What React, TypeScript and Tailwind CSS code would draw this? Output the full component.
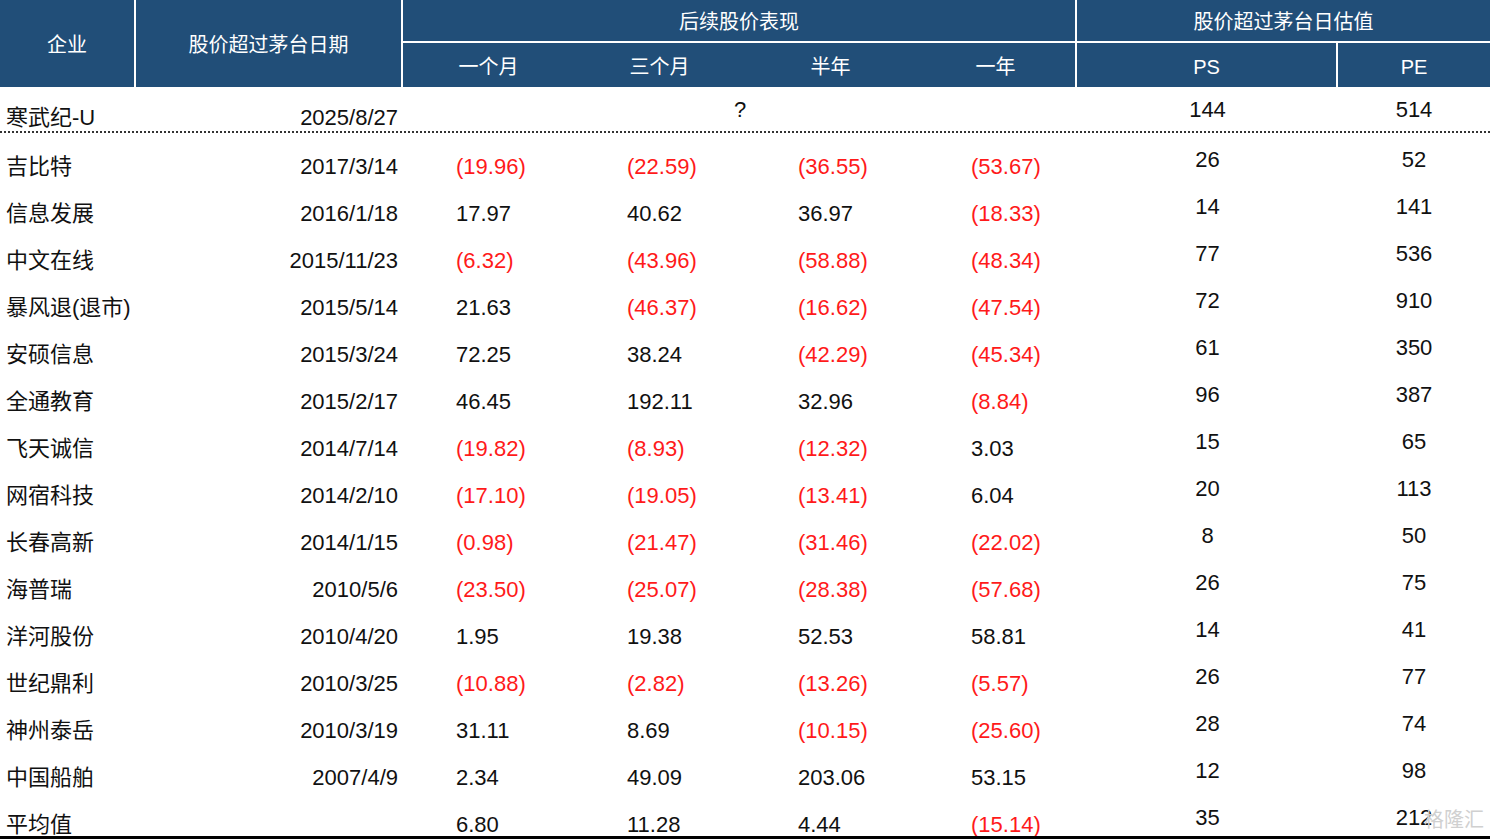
const rows: [string, string, string[], string, string][] = [
  ["吉比特", "2017/3/14", ["(19.96)", "(22.59)", "(36.55)", "(53.67)"], "26", "52"],
  ["信息发展", "2016/1/18", ["17.97", "40.62", "36.97", "(18.33)"], "14", "141"],
  ["中文在线", "2015/11/23", ["(6.32)", "(43.96)", "(58.88)", "(48.34)"], "77", "536"],
  ["暴风退(退市)", "2015/5/14", ["21.63", "(46.37)", "(16.62)", "(47.54)"], "72", "910"],
  ["安硕信息", "2015/3/24", ["72.25", "38.24", "(42.29)", "(45.34)"], "61", "350"],
  ["全通教育", "2015/2/17", ["46.45", "192.11", "32.96", "(8.84)"], "96", "387"],
  ["飞天诚信", "2014/7/14", ["(19.82)", "(8.93)", "(12.32)", "3.03"], "15", "65"],
  ["网宿科技", "2014/2/10", ["(17.10)", "(19.05)", "(13.41)", "6.04"], "20", "113"],
  ["长春高新", "2014/1/15", ["(0.98)", "(21.47)", "(31.46)", "(22.02)"], "8", "50"],
  ["海普瑞", "2010/5/6", ["(23.50)", "(25.07)", "(28.38)", "(57.68)"], "26", "75"],
  ["洋河股份", "2010/4/20", ["1.95", "19.38", "52.53", "58.81"], "14", "41"],
  ["世纪鼎利", "2010/3/25", ["(10.88)", "(2.82)", "(13.26)", "(5.57)"], "26", "77"],
  ["神州泰岳", "2010/3/19", ["31.11", "8.69", "(10.15)", "(25.60)"], "28", "74"],
  ["中国船舶", "2007/4/9", ["2.34", "49.09", "203.06", "53.15"], "12", "98"],
  ["平均值", "", ["6.80", "11.28", "4.44", "(15.14)"], "35", "212"],
];

const cols = "grid grid-cols-[136px_267px_171px_171px_171px_161px_261px_152px]";

export default function App() {
  return (
    <div
      className="relative w-[1490px] h-[839px] bg-white text-[22px] text-[#111] overflow-hidden"
      style={{ fontFamily: '"Liberation Sans Narrow", "Liberation Sans", "Noto Sans CJK SC", sans-serif' }}
    >
      <div className={`${cols} grid-rows-[43px_44px] bg-[#214e78] text-white text-[20px]`}>
        <div className="row-span-2 flex items-center justify-center pt-[2px] border-r-2 border-white">企业</div>
        <div className="row-span-2 flex items-center justify-center pt-[2px] border-r-2 border-white">股价超过茅台日期</div>
        <div className="col-span-4 flex items-center justify-center pt-[2px] border-r-2 border-b-2 border-white">后续股价表现</div>
        <div className="col-span-2 flex items-center justify-center pt-[2px] border-b-2 border-white">股价超过茅台日估值</div>
        <div className="flex items-center justify-center pt-[3px]">一个月</div>
        <div className="flex items-center justify-center pt-[3px]">三个月</div>
        <div className="flex items-center justify-center pt-[3px]">半年</div>
        <div className="flex items-center justify-center pt-[3px] border-r-2 border-white">一年</div>
        <div className="flex items-center justify-center pt-[3px] border-r-2 border-white">PS</div>
        <div className="flex items-center justify-center pt-[3px]">PE</div>
      </div>

      <div className={`${cols} h-[46px] border-b-2 border-dotted border-[#333] leading-none`}>
        <div className="flex items-end pl-[6px] pb-[2px]">寒武纪-U</div>
        <div className="flex items-end justify-end pr-[5px] pb-[2px]">2025/8/27</div>
        <div className="col-span-4 flex items-start justify-center pt-[12px]">?</div>
        <div className="flex items-end justify-center pb-[10px]">144</div>
        <div className="flex items-end justify-center pb-[10px]">514</div>
      </div>

      {rows.map(([name, date, vals, ps, pe]) => (
        <div key={name} className={`${cols} h-[47px] leading-none`}>
          <div className="flex items-end pl-[6px] pb-[2px] pr-[2px] whitespace-nowrap overflow-hidden">{name}</div>
          <div className="flex items-end justify-end pr-[5px] pb-[2px]">{date}</div>
          {vals.map((v, i) => (
            <div key={i} className={`flex items-end pb-[2px] ${i === 3 ? "pl-[55px]" : "pl-[53px]"} ${v.startsWith("(") ? "text-[#ff1a1a]" : ""}`}>
              {v}
            </div>
          ))}
          <div className="flex items-end justify-center pb-[9px]">{ps}</div>
          <div className="flex items-end justify-center pb-[9px]">{pe}</div>
        </div>
      ))}

      <div className="absolute left-0 right-0 top-[836px] h-[3px] bg-black" />
      <div className="absolute right-[6px] bottom-[4px] text-[20px] text-[#d0d0d0]">格隆汇</div>
    </div>
  );
}
